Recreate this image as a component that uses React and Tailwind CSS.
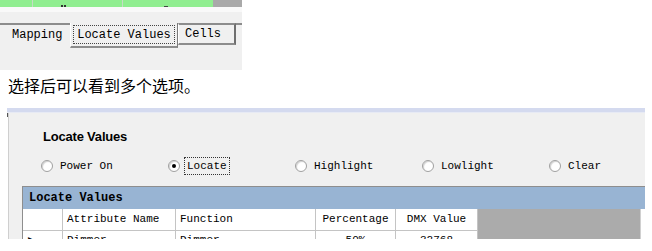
import React from 'react';

const mono = { fontFamily: '"Liberation Mono", "DejaVu Sans Mono", monospace' };

const Radio = ({ label, checked, focused }) => (
  <div className="w-[127px] h-[18px] flex items-center shrink-0">
    <span className="w-[12px] h-[12px] rounded-full border border-[#a0a0a0] bg-white shadow-[inset_1px_1px_1px_rgba(0,0,0,0.18)] flex items-center justify-center">
      {checked && <span className="w-[4px] h-[4px] rounded-full bg-black" />}
    </span>
    <span
      className={`ml-[4px] h-[18px] px-[2px] flex items-center text-[11px] text-black ${focused ? 'border border-dotted border-[#333]' : 'border border-transparent'}`}
      style={mono}
    >
      {label}
    </span>
  </div>
);

const TopShot = () => (
  <div className="w-[242px] h-[70px] bg-[#f0f0f0] flex flex-col overflow-hidden">
    <div className="h-[7px] flex shrink-0">
      <div className="w-[33px] bg-[#90ee90] border-r border-[#c6dcc6]" />
      <div className="w-[90px] bg-[#90ee90] border-r border-[#c6dcc6] flex items-end">
        <div className="ml-[28px] flex gap-[1px]">
          <span className="w-[2px] h-[2px] bg-[#333]" />
          <span className="w-[2px] h-[2px] bg-[#333]" />
        </div>
      </div>
      <div className="w-[90px] bg-[#90ee90] flex items-end">
        <span className="ml-[41px] w-[4px] h-[1px] bg-[#444]" />
      </div>
      <div className="flex-1 bg-[#a9a9a9]" />
    </div>
    <div className="h-[5px] bg-[#f9f9f9] shrink-0" />
    <div className="h-[11px] shrink-0" />
    <div className="flex items-start h-[26px]" style={mono}>
      <div className="w-[70px] h-[22px] border-t-2 border-[#8c8c8c] flex items-center pl-[12px] text-[12px] text-black">
        Mapping
      </div>
      <div className="w-[108px] h-[25px] bg-[#f0f0f0] border-l border-white border-r border-r-[#7a7a7a] border-b-2 border-b-[#8c8c8c] flex items-center justify-center">
        <span className="h-[19px] w-[102px] border border-dotted border-[#444] flex items-center justify-center text-[12px] text-black">
          Locate Values
        </span>
      </div>
      <div className="w-[58px] h-[22px] border-t-2 border-[#8c8c8c] border-l border-l-white border-r-2 border-r-[#6e6e6e] border-b-2 border-b-[#8c8c8c] flex items-center pl-[6px] text-[12px] text-black">
        Cells
      </div>
      <div className="flex-1 h-[22px] border-t-2 border-[#8c8c8c]" />
    </div>
  </div>
);

const cols = 'grid grid-cols-[40px_113px_140px_80px_82px_162px_5px]';

const LocatePanel = () => (
  <div className="ml-[7px] w-[638px] h-[132px] overflow-hidden flex flex-col">
    <div className="h-[1px] shrink-0" />
    <div className="h-[4px] bg-[#d4daef] shrink-0" />
    <div className="h-[1px] bg-[#e7eaf4] shrink-0" />
    <div className="flex-1 flex">
      <div className="w-[2px] flex flex-col">
        <span className="h-[4px] w-[1px] bg-[#555]" />
      </div>
      <div className="flex-1 bg-[#f0f0f0] border-l border-[#cfcfcf] pl-[12px] flex flex-col">
        <div
          className="mt-[16px] h-[16px] leading-[16px] pl-[22px] text-[13px] font-bold text-black tracking-[-0.2px]"
          style={{ fontFamily: '"Liberation Sans", Arial, sans-serif' }}
        >
          Locate Values
        </div>
        <div className="mt-[12px] pl-[20px] flex">
          <Radio label="Power On" />
          <Radio label="Locate" checked focused />
          <Radio label="Highlight" />
          <Radio label="Lowlight" />
          <Radio label="Clear" />
        </div>
        <div className="mt-[11px] ml-[1px] border-t border-l border-[#8e8e8e] flex flex-col" style={mono}>
          <div className="h-[22px] bg-[#98b4d3] flex items-center pl-[6px] text-[12px] font-bold text-black">
            Locate Values
          </div>
          <div className={`${cols} h-[22px] text-[11px] text-black`}>
            <div className="bg-white border-r border-b border-[#c4c4c4]" />
            <div className="bg-white border-r border-b border-[#c4c4c4] flex items-center pl-[4px]">Attribute Name</div>
            <div className="bg-white border-r border-b border-[#c4c4c4] flex items-center pl-[4px]">Function</div>
            <div className="bg-white border-r border-b border-[#c4c4c4] flex items-center justify-center">Percentage</div>
            <div className="bg-white border-r border-b border-[#c4c4c4] flex items-center justify-center">DMX Value</div>
            <div className="bg-[#ababab]" />
            <div className="bg-white border-l border-[#d0d0d0]" />
          </div>
          <div className={`${cols} h-[20px] text-[11px] leading-[13px] text-black`}>
            <div className="bg-white border-r border-[#c4c4c4] pt-[3px] pl-[5px] text-[9px]">▶</div>
            <div className="bg-white border-r border-[#c4c4c4] pt-[3px] pl-[4px]">Dimmer</div>
            <div className="bg-white border-r border-[#c4c4c4] pt-[3px] pl-[4px]">Dimmer</div>
            <div className="bg-white border-r border-[#c4c4c4] pt-[3px] text-center">50%</div>
            <div className="bg-white border-r border-[#c4c4c4] pt-[3px] text-center">32768</div>
            <div className="bg-[#ababab]" />
            <div className="bg-white border-l border-[#d0d0d0]" />
          </div>
        </div>
      </div>
    </div>
  </div>
);

export default function App() {
  return (
    <div className="w-[652px] h-[251px] bg-white overflow-hidden">
      <TopShot />
      <p
        className="mt-[7px] ml-[8px] h-[16px] leading-[16px] text-[16px] text-black"
        style={{ fontFamily: '"Noto Sans CJK SC", "Noto Sans", sans-serif' }}
      >
        选择后可以看到多个选项。
      </p>
      <div className="h-[14px]" />
      <LocatePanel />
    </div>
  );
}
